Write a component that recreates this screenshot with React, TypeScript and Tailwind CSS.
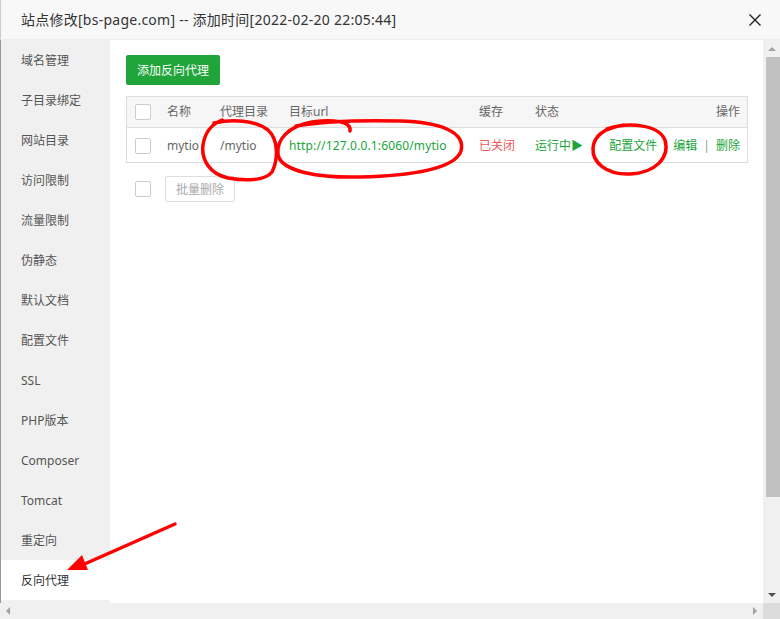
import React from "react";

const menu = [
  "域名管理",
  "子目录绑定",
  "网站目录",
  "访问限制",
  "流量限制",
  "伪静态",
  "默认文档",
  "配置文件",
  "SSL",
  "PHP版本",
  "Composer",
  "Tomcat",
  "重定向",
  "反向代理",
];

function Checkbox() {
  return <span className="block w-4 h-4 border border-[#ccc] rounded-[2px] bg-white" />;
}

function Annotations() {
  return (
    <svg className="absolute inset-0 pointer-events-none" width="780" height="619" viewBox="0 0 780 619">
      <g fill="none" stroke="#f00" strokeWidth="3.5" strokeLinecap="round" strokeLinejoin="round">
        <path d="M214,123 C232,119 255,120 268,130 C279,140 278,160 272,172 C265,181 245,181 228,178 C210,174 201,160 203,145 C205,132 212,124 222,120" />
        <path d="M350,131 C352,121 332,119 312,122 C288,126 276,140 278,155 C282,172 320,178 360,177 C410,176 455,169 461,151 C466,132 440,122 400,121 C360,120 320,122 296,126" />
        <path d="M607,129 C628,122 658,124 665,140 C670,158 655,173 630,174 C606,175 592,162 593,148 C594,136 604,128 624,125" />
        <path d="M175,524 L80,566" />
      </g>
      <path d="M67,570 L82,555 L88,570 Z" fill="#f00" />
    </svg>
  );
}

export default function App() {
  return (
    <div className="relative w-[780px] h-[619px] flex flex-col overflow-hidden bg-white text-[12px] text-[#666] font-['Noto_Sans','Noto_Sans_CJK_SC',sans-serif]">
      <div className="h-[40px] shrink-0 flex items-center justify-between bg-[#f8f8f8] border-b border-[#eee] border-l border-l-[#ccc] pl-[20px] pr-[18px]">
        <span className="text-[14px] tracking-[0.25px] text-[#333] leading-none pt-[1px]">站点修改[bs-page.com] -- 添加时间[2022-02-20 22:05:44]</span>
        <svg width="14" height="14" viewBox="0 0 14 14">
          <path d="M1.5,1.5 L12.5,12.5 M12.5,1.5 L1.5,12.5" stroke="#222" strokeWidth="1.4" />
        </svg>
      </div>

      <div className="flex flex-1 min-h-0">
        <div className="flex flex-1 min-w-0">
          <div className="w-[110px] shrink-0 bg-[#f0f0f0] border-l border-[#999]">
            {menu.map((m) => (
              <div
                key={m}
                className={`h-[40px] flex items-center pl-[20px] pt-[2px] leading-none ${m === "反向代理" ? "bg-white text-[#333]" : "text-[#555]"}`}
              >
                {m}
              </div>
            ))}
          </div>

          <div className="flex-1 pl-[16px] pr-[15px] pt-[15px]">
            <button className="h-[30px] px-[11px] pt-[2px] rounded-[2px] bg-[#20a53a] text-white leading-none">添加反向代理</button>

            <div className="mt-[11px] border border-[#ddd]">
              <div className="h-[31px] flex items-center bg-[#f6f6f6] border-b border-[#ddd]">
                <div className="w-[32px] pl-[8px]"><Checkbox /></div>
                <div className="w-[53px] pl-[8px]">名称</div>
                <div className="w-[69px] pl-[8px]">代理目录</div>
                <div className="w-[190px] pl-[8px]">目标url</div>
                <div className="w-[56px] pl-[8px]">缓存</div>
                <div className="w-[74px] pl-[8px]">状态</div>
                <div className="flex-1 text-right pr-[7px]">操作</div>
              </div>
              <div className="h-[34px] flex items-center pt-[1px]">
                <div className="w-[32px] pl-[8px]"><Checkbox /></div>
                <div className="w-[53px] pl-[8px]">mytio</div>
                <div className="w-[69px] pl-[8px]">/mytio</div>
                <div className="w-[190px] pl-[8px] text-[#20a53a] tracking-[0.15px]">http://127.0.0.1:6060/mytio</div>
                <div className="w-[56px] pl-[8px] text-[#f05656]">已关闭</div>
                <div className="w-[74px] pl-[8px] text-[#20a53a]">运行中▶</div>
                <div className="flex-1 flex justify-end items-center pr-[7px] text-[#20a53a]">
                  <span>配置文件</span>
                  <span className="ml-[16px]">编辑</span>
                  <span className="mx-[6px] text-[#999]">|</span>
                  <span>删除</span>
                </div>
              </div>
            </div>

            <div className="mt-[13px] flex items-center">
              <div className="w-[39px] pl-[9px]"><Checkbox /></div>
              <button className="h-[26px] px-[10px] pt-[1px] border border-[#ddd] rounded-[2px] bg-white text-[#aaa] leading-none">批量删除</button>
            </div>
          </div>
        </div>

        <div className="w-[17px] shrink-0 bg-[#f0f0f0] flex flex-col items-center">
          <div className="h-[17px] flex items-center justify-center">
            <span className="w-0 h-0 border-l-[4px] border-r-[4px] border-b-[4px] border-l-transparent border-r-transparent border-b-[#a3a3a3]" />
          </div>
          <div className="w-[14px] ml-[3px] h-[440px] bg-[#c1c1c1]" />
          <div className="flex-1" />
          <div className="h-[17px] flex items-center justify-center">
            <span className="w-0 h-0 border-l-[4px] border-r-[4px] border-t-[4px] border-l-transparent border-r-transparent border-t-[#505050]" />
          </div>
        </div>
      </div>

      <div className="h-[16px] shrink-0 flex">
        <div className="flex-1 bg-[#f0f0f0] flex items-center justify-between px-[6px]">
          <span className="w-0 h-0 border-t-[4px] border-b-[4px] border-r-[4px] border-t-transparent border-b-transparent border-r-[#a3a3a3]" />
          <span className="w-0 h-0 border-t-[4px] border-b-[4px] border-l-[4px] border-t-transparent border-b-transparent border-l-[#a3a3a3]" />
        </div>
        <div className="w-[17px] bg-[#dcdcdc]" />
      </div>

      <Annotations />
    </div>
  );
}
